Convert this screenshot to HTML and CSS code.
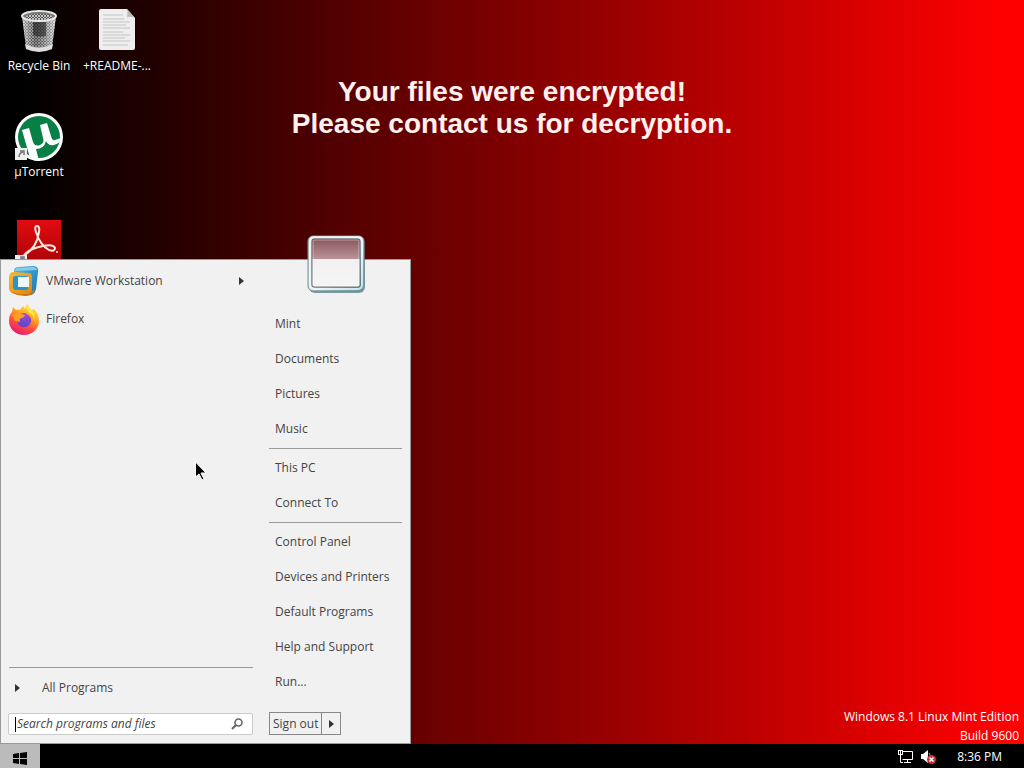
FILE: index.html
```html
<!DOCTYPE html>
<html lang="en">
<head>
	<meta charset="UTF-8">
	<title>Desktop</title>
	<link rel="stylesheet" href="styles.css">
</head>
<body>
<main class="desktop">
	<h1 class="message">Your files were encrypted!<br>Please contact us for decryption.</h1>

	<div class="icons">
		<a class="icon" href="#">
			<svg width="48" height="48" viewBox="0 0 48 48">
				<defs>
					<pattern id="mesh" width="3" height="3" patternUnits="userSpaceOnUse">
						<rect width="3" height="3" fill="#555"/>
						<path d="M0 0L3 3M3 0L0 3" stroke="#ddd" stroke-width="0.8"/>
					</pattern>
					<linearGradient id="shine">
						<stop offset="0" stop-color="#fff" stop-opacity="0.5"/>
						<stop offset="0.4" stop-color="#333" stop-opacity="0.4"/>
						<stop offset="1" stop-color="#fff" stop-opacity="0.6"/>
					</linearGradient>
				</defs>
				<path d="M7 9L11 40Q24 47 37 40L41 9Z" fill="url(#mesh)"/>
				<path d="M7 9L11 40Q24 47 37 40L41 9Z" fill="url(#shine)"/>
				<path d="M18 15h13v14q-7 2-13-1z" fill="#222" opacity="0.6"/>
				<path d="M10 37Q24 44 38 37L37 42Q24 48 11 42Z" fill="#ddd"/>
				<ellipse cx="24" cy="9" rx="17" ry="5" fill="#777" stroke="#e8e8e8" stroke-width="2"/>
				<ellipse cx="24" cy="10" rx="14" ry="3" fill="url(#mesh)"/>
			</svg>
			<span>Recycle Bin</span>
		</a>
		<a class="icon" href="#">
			<svg width="48" height="48" viewBox="0 0 48 48">
				<path d="M6 4q0-2 2-2h26l8 9v30q0 2-2 2H8q-2 0-2-2z" fill="#eee"/>
				<path d="M34 2l8 9q-3-2-8-1q1-4 0-8z" fill="#bbb"/>
				<path d="M10 8h20M10 12h21M10 15h27M10 18h23M10 21h27M10 25h20M10 28h27M10 31h22M10 34h27M10 38h25" stroke="#c4c4c4"/>
			</svg>
			<span>+README-...</span>
		</a>
		<a class="icon" href="#">
			<svg width="48" height="48" viewBox="0 0 48 48">
				<circle cx="24" cy="24" r="24" fill="#fff"/>
				<circle cx="24" cy="24" r="21" fill="#087f45"/>
				<path d="M7 17l7-2 4 14q2 5 7 3t3-7l-3-13 7-2 4 13q1 5 4 4t6-2q0 5-7 7-6 1-8-4-2 8-10 8l3 12q-6 0-9-3z" fill="#fff"/>
				<path d="M0 35h12v12H0z" fill="#eee"/>
				<path d="M4 44q0-4 4-5M5 38h4v4" fill="none" stroke="#777" stroke-width="1.5"/>
			</svg>
			<span>µTorrent</span>
		</a>
		<span></span>
		<a class="icon" href="#" aria-label="PDF reader">
			<svg width="48" height="48" viewBox="0 0 48 48">
				<defs>
					<linearGradient id="pdf" x2="0" y2="1">
						<stop offset="0" stop-color="#e20b10"/>
						<stop offset="1" stop-color="#a90508"/>
					</linearGradient>
				</defs>
				<path d="M2 1h44v44H2z" fill="url(#pdf)"/>
				<path d="M10 36Q22 28 24 13Q25 7 22 7Q19 7 21 13Q25 26 34 31Q40 33 40 29Q38 25 28 27Q17 29 11 34Q7 38 9 40" fill="none" stroke="#ffe6dc" stroke-width="2"/>
				<circle cx="42" cy="33" r="1" fill="#fdd"/>
				<path d="M0 36h12v12H0z" fill="#eee"/>
				<path d="M4 44q0-4 4-5M5 38h4v4" fill="none" stroke="#777" stroke-width="1.5"/>
			</svg>
		</a>
	</div>

	<p class="watermark">Windows 8.1 Linux Mint Edition<br>Build 9600</p>

	<div class="menu">
		<div class="programs">
			<a class="program" href="#">
				<svg width="32" height="32" viewBox="0 0 32 32">
					<defs>
						<linearGradient id="vblue" x2="1" y2="1">
							<stop offset="0" stop-color="#53b9e5"/>
							<stop offset="1" stop-color="#1475b5"/>
						</linearGradient>
						<linearGradient id="vgold" x2="1" y2="1">
							<stop offset="0" stop-color="#f8b936"/>
							<stop offset="1" stop-color="#dd8514"/>
						</linearGradient>
					</defs>
					<path d="M6 6q0-4 5-4l15-1q5 1 4 6l-2 17q-1 5-5 6l-6 1-11-6Z" fill="url(#vblue)"/>
					<path d="M6 6l3-3 17-1q3 1 3 3L9 6Z" fill="#82cdea"/>
					<path fill-rule="evenodd" d="M1 12q0-5 5-5l14 1q4 0 4 4v13q0 4-4 4H7q-6-1-6-6ZM5 13v9q0 3 3 3h9q3 0 3-3v-8q0-3-3-3H7q-2 0-2 2Z" fill="url(#vgold)"/>
					<path d="M3 27l8 2h9q4 0 5-4l2-1q-1 5-5 6l-5 1-8-1Z" fill="#c77814"/>
					<path d="M7 11h11q2 0 2 3v8q0 3-3 3H8q-3 0-3-3v-9q0-2 2-2Z" fill="#2b93ca"/>
					<path d="M10 12h11v10H10z" fill="#eef7fc"/>
				</svg>
				<span>VMware Workstation</span>
				<svg class="arrow" width="5" height="8" viewBox="0 0 5 8"><path d="M0 0L5 4L0 8Z"/></svg>
			</a>
			<a class="program" href="#">
				<svg width="32" height="32" viewBox="0 0 32 32">
					<defs>
						<linearGradient id="fox" x1="0.8" y1="0" x2="0.3" y2="1">
							<stop offset="0" stop-color="#fff04b"/>
							<stop offset="0.35" stop-color="#ffad20"/>
							<stop offset="0.65" stop-color="#ff533b"/>
							<stop offset="1" stop-color="#e71678"/>
						</linearGradient>
						<linearGradient id="globe" x2="0" y2="1">
							<stop offset="0" stop-color="#a44bd0"/>
							<stop offset="1" stop-color="#5b45c9"/>
						</linearGradient>
					</defs>
					<path d="M4 9l1-5q2 2 3 3 3-1 4 0l3-4 2 3 2-5q2 4 5 6l2-1q5 5 5 12A15 14 0 0 1 1 18q0-6 3-9Z" fill="url(#fox)"/>
					<path d="M10 13q5-5 9-2 5 3 4 8-2 5-7 5-6 0-7-6Z" fill="url(#globe)"/>
					<path d="M4 12q5-3 9-1l4 1q-1 3-4 3-2 1-1 4l-5-1Z" fill="#ff9d22"/>
					<path d="M19 1q1 4 5 6 4 5 2 11 0-6-4-8-5-4-3-9Z" fill="#ffe744"/>
				</svg>
				<span>Firefox</span>
			</a>
			<a class="all" href="#">
				<svg class="arrow" width="5" height="8" viewBox="0 0 5 8"><path d="M0 0L5 4L0 8Z"/></svg>
				<span>All Programs</span>
			</a>
			<label class="search">
				<span class="caret"></span>
				<input type="text" placeholder="Search programs and files" aria-label="Search programs and files">
				<svg width="12" height="12" viewBox="0 0 12 12" fill="none" stroke="#666"><circle cx="7.5" cy="4.5" r="3.5" stroke-width="1.6"/><path d="M5 7L1 11" stroke-width="2.2"/></svg>
			</label>
		</div>

		<div class="places">
			<svg class="user" width="64" height="64" viewBox="0 0 64 64">
				<defs>
					<linearGradient id="glass" x2="0" y2="1">
						<stop offset="0" stop-color="#8b565b"/>
						<stop offset="0.41" stop-color="#b99398"/>
						<stop offset="0.42" stop-color="#f1f1f2"/>
						<stop offset="1" stop-color="#f5f5f6"/>
					</linearGradient>
					<linearGradient id="frame" x2="1" y2="1">
						<stop offset="0" stop-color="#e3cccc"/>
						<stop offset="0.5" stop-color="#d2dfe2"/>
						<stop offset="1" stop-color="#4fa2ae"/>
					</linearGradient>
				</defs>
				<rect x="5" y="5" width="56" height="56" rx="6" fill="#355e65" opacity="0.6"/>
				<rect x="4" y="4" width="56" height="55" rx="5" fill="url(#frame)" stroke="#719197"/>
				<rect x="6" y="5" width="52" height="52" rx="4" fill="none" stroke="#fff" stroke-opacity="0.7" stroke-width="2"/>
				<rect x="8" y="7" width="48" height="48" rx="2" fill="url(#glass)" stroke="#53545f"/>
				<rect x="9" y="8" width="46" height="46" rx="1" fill="none" stroke="#fff" stroke-opacity="0.4"/>
			</svg>
			<nav class="links">
				<a href="#">Mint</a>
				<a href="#">Documents</a>
				<a href="#">Pictures</a>
				<a href="#">Music</a>
				<hr>
				<a href="#">This PC</a>
				<a href="#">Connect To</a>
				<hr>
				<a href="#">Control Panel</a>
				<a href="#">Devices and Printers</a>
				<a href="#">Default Programs</a>
				<a href="#">Help and Support</a>
				<a href="#">Run...</a>
			</nav>
			<div class="power">
				<button type="button">Sign out</button>
				<button type="button" class="more" aria-label="More options"><svg class="arrow" width="5" height="8" viewBox="0 0 5 8"><path d="M0 0L5 4L0 8Z"/></svg></button>
			</div>
		</div>
	</div>

	<svg class="cursor" width="12" height="20" viewBox="0 0 12 20"><path d="M0.5 1v15l3.5-3 3 6 2-1-3-6h5Z" fill="#000" stroke="#fff"/></svg>
</main>

<footer class="taskbar">
	<button type="button" class="start" aria-label="Start">
		<svg width="14" height="13" viewBox="0 0 14 13"><path d="M0 2l6-1v5H0zM7 1l7-1v6H7zM0 7h6v5l-6-1zM7 7h7v6l-7-1z"/></svg>
	</button>
	<div class="tray">
		<svg width="15" height="14" viewBox="0 0 15 14" fill="none" stroke="#fff"><path d="M5 1.5H14.5V9.5H4.5M9.5 9.5V12M6 12.5H13M2.5 5V12.5H5"/><rect x="0.5" y="0.5" width="4" height="4"/><path d="M2.5 1v3"/></svg>
		<svg width="16" height="15" viewBox="0 0 16 15"><path d="M0 4h2l5-4v13L2 9H0z" fill="#fff"/><path d="M8 3q2 2 1 5" fill="none" stroke="#999"/><circle cx="10.5" cy="9.5" r="4.5" fill="#c8323c"/><path d="M8.5 7.5l4 4M12.5 7.5l-4 4" stroke="#fff" stroke-width="1.5"/></svg>
		<time>8:36 PM</time>
	</div>
</footer>
</body>
</html>
```
FILE: styles.css
```css
*{
	box-sizing: border-box;
}
body{
	margin: 0;
	height: 100vh;
	display: flex;
	flex-direction: column;
	overflow: hidden;
	font-family: "Open Sans", "Noto Sans", sans-serif;
	font-size: 12px;
	line-height: 16px;
	color: #fff;
	background: #000;
}
a{
	color: inherit;
	text-decoration: none;
}
button, input{
	font: inherit;
	color: inherit;
	margin: 0;
	padding: 0;
}
.desktop{
	flex: 1;
	min-height: 0;
	position: relative;
	overflow: hidden;
	background: linear-gradient(to right, #000 2%, #f00 98%);
}
.message{
	position: absolute;
	top: 76px;
	left: 0;
	right: 0;
	margin: 0;
	text-align: center;
	color: #fff0ee;
	font: bold 28px/32px "Liberation Sans", sans-serif;
}
.icons{
	display: grid;
	grid-template-columns: 78px 78px;
	grid-auto-rows: 106px;
}
.icon{
	display: flex;
	flex-direction: column;
	align-items: center;
	gap: 3px;
	padding-top: 7px;
	white-space: nowrap;
	text-shadow: 1px 1px 1px #000;
}
.watermark{
	position: absolute;
	right: 5px;
	bottom: -1px;
	margin: 0;
	text-align: right;
	line-height: 19px;
}

/* start menu */
.menu{
	position: absolute;
	left: 0;
	bottom: 0;
	display: grid;
	grid-template-columns: 260px 149px;
	color: #444;
	background: #f1f1f1;
	border: 1px solid #999;
}
.programs{
	display: flex;
	flex-direction: column;
	padding: 2px 8px 8px 7px;
}
.program{
	display: flex;
	align-items: center;
	gap: 6px;
	height: 38px;
}
.program .arrow{
	margin-left: auto;
	margin-right: 9px;
}
.arrow{
	fill: #333;
}
.all{
	display: flex;
	align-items: center;
	gap: 22px;
	height: 41px;
	margin: auto 0 5px 1px;
	padding-left: 6px;
	border-top: 1px solid #999;
}
.search{
	display: flex;
	align-items: center;
	height: 22px;
	padding: 0 9px 0 6px;
	background: #fff;
	border: 1px solid #ccc;
	border-radius: 2px;
}
.caret{
	width: 1px;
	height: 15px;
	background: #000;
}
.search input{
	flex: 1;
	min-width: 0;
	padding-left: 1px;
	border: 0;
	outline: 0;
	background: none;
	font-style: italic;
}
.search input::placeholder{
	color: #444;
	opacity: 1;
}
.places{
	display: flex;
	flex-direction: column;
	padding: 0 8px 8px;
}
.user{
	margin-top: -28px;
	margin-left: 35px;
}
.links{
	display: flex;
	flex-direction: column;
	margin-top: 10px;
}
.links a{
	padding-left: 6px;
	line-height: 35px;
}
.links hr{
	width: 100%;
	height: 1px;
	margin: 2px 0 1px;
	border: 0;
	background: #999;
}
.power{
	display: flex;
	margin-top: 13px;
}
.power button{
	height: 23px;
	padding: 0 3px;
	border: 1px solid #888;
	background: #f1f1f1;
}
.power .more{
	width: 20px;
	margin-left: -1px;
}

.cursor{
	position: absolute;
	left: 195px;
	top: 461px;
}

/* taskbar */
.taskbar{
	display: flex;
	height: 24px;
	background: #000;
}
.start{
	display: flex;
	align-items: center;
	justify-content: center;
	width: 40px;
	padding-top: 4px;
	border: 0;
	background: #bbb;
}
.tray{
	display: flex;
	align-items: center;
	gap: 8px;
	margin-left: auto;
	padding: 2px 22px 0 0;
}
.tray time{
	margin-left: 12px;
}
```
